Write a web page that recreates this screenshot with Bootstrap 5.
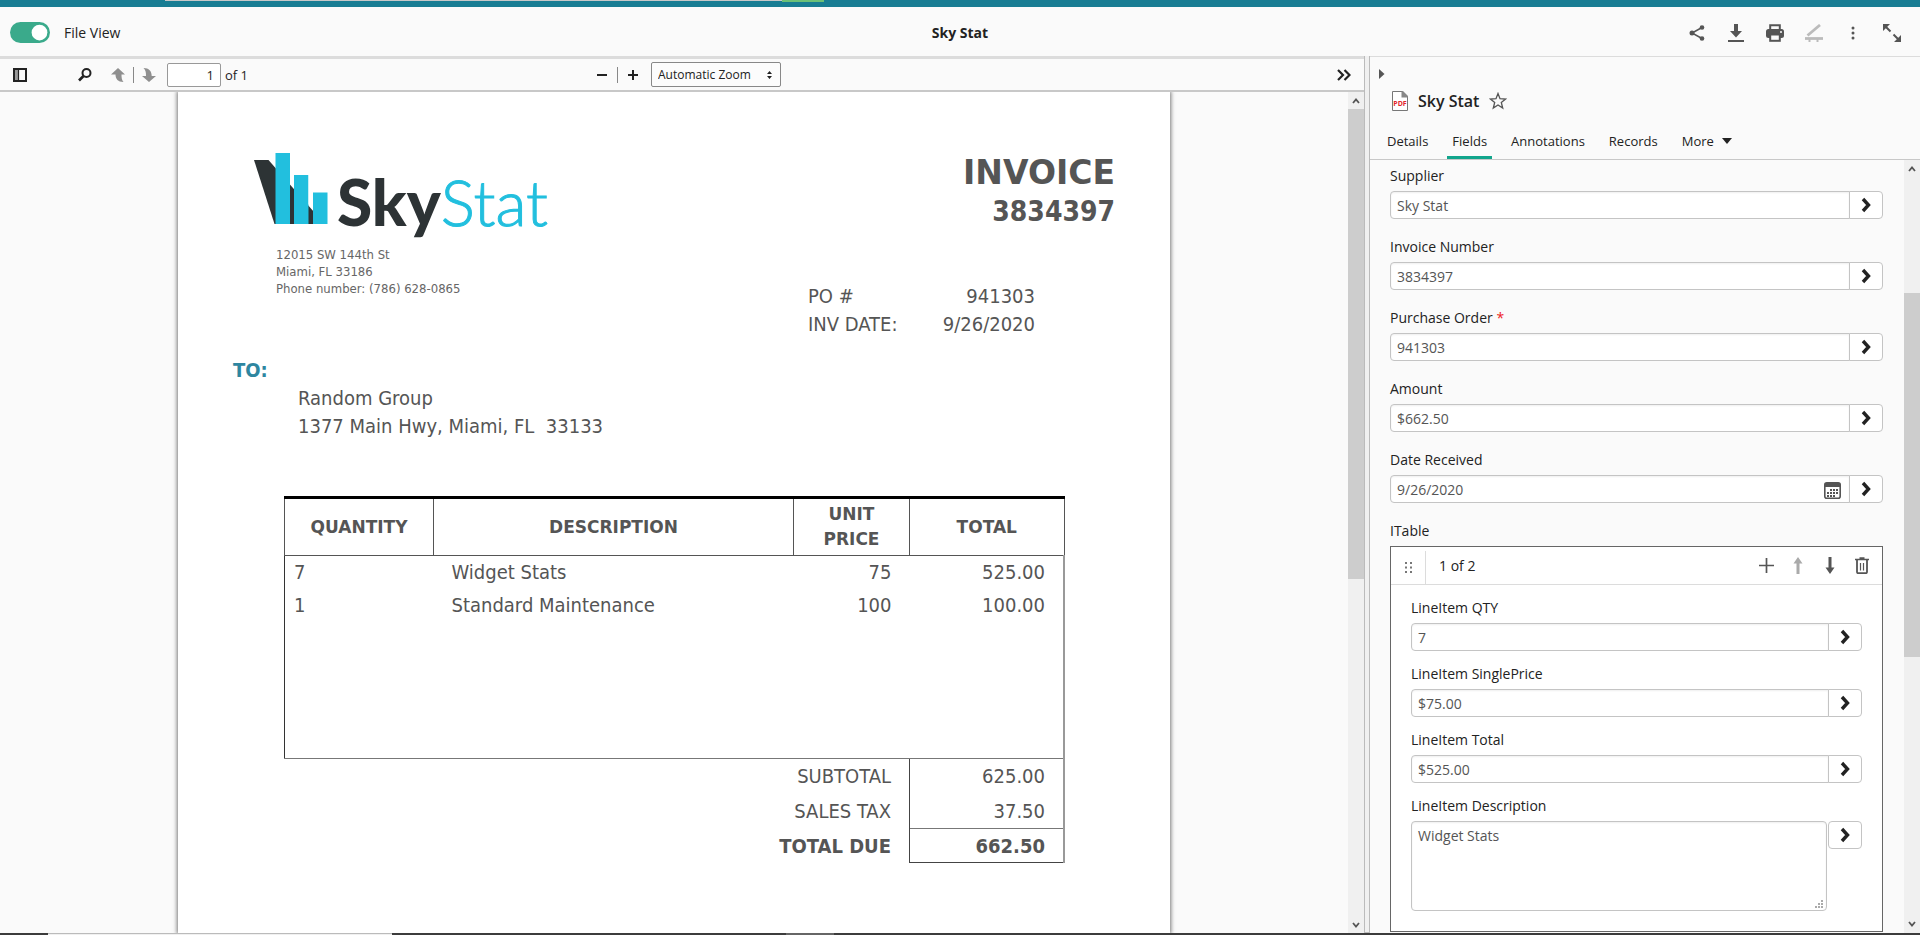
<!DOCTYPE html>
<html lang="en">
<head>
<meta charset="utf-8">
<meta name="viewport" content="width=device-width, initial-scale=1">
<title>Sky Stat</title>
<link href="https://cdn.jsdelivr.net/npm/bootstrap@5.3.0/dist/css/bootstrap.min.css" rel="stylesheet">
<style>
  body { font-family: "Open Sans", "Noto Sans", sans-serif; font-size: 14px; line-height: 20px; color: #222; background: #fafafa; }
  svg { display: block; }
  .min-h-0 { min-height: 0; }
  .icon-btn { border: 0; background: none; padding: 0; color: #555; display: flex; align-items: center; justify-content: center; flex: none; }
  .brand-strip { height: 7px; background: #187d93; padding-left: 165px; }
  .strip-search { width: 617px; height: 1px; background: #c8c8c8; }
  .strip-button { width: 42px; height: 2px; background: #6cc077; }
  .app-header { height: 49px; padding: 2px 10px 0; }
  .app-header > * { flex: 1 1 33%; }
  .file-switch { min-height: 0; gap: 14px; }
  .file-switch .form-check-input { width: 40px; height: 21px; margin: 0; border: 0; background-color: #3aaa8b; background-image: url("data:image/svg+xml,%3csvg xmlns='http://www.w3.org/2000/svg' viewBox='-4 -4 8 8'%3e%3ccircle r='3' fill='%23fff'/%3e%3c/svg%3e"); }
  .header-tools { gap: 21px; padding-right: 9px; }
  .header-tools .icon-btn { width: 18px; height: 18px; }

  .viewer { border-top: 3px solid #dcdcdc; min-width: 0; }
  .pdf-bar { height: 33px; padding: 0 13px; border-bottom: 2px solid #c8c8c8; font-size: 13px; }
  .pdf-bar .icon-btn { width: 14px; height: 16px; color: #222; }
  .pdf-bar .rule { width: 1px; height: 16px; background: #888; }
  .bar-side { flex: 1 1 0; }
  .find-btn { margin: 0 19px 0 51px; }
  .zoom-group { padding-left: 12px; }
  .page-input { width: 54px; height: 24px; margin-left: 11px; border: 1px solid #999; border-radius: 2px; background: #fff; text-align: right; padding: 0 6px; font-size: 13px; color: #222; }
  .zoom-select { width: 130px; height: 25px; margin-left: 11px; border: 1px solid #888; border-radius: 2px; padding: 0 6px; font-size: 12px; color: #222; appearance: none; background: #fcfcfc url("data:image/svg+xml,%3csvg xmlns='http://www.w3.org/2000/svg' width='7' height='10'%3e%3cpath d='M1 4L3.500 1L6 4zM1 6L3.500 9L6 6z' fill='%23222'/%3e%3c/svg%3e") no-repeat right 7px center; }
  .scroll-col { width: 16px; background: #f0f0f0; flex: none; }
  .scroll-col .icon-btn { height: 17px; }
  .scroll-thumb { background: #cdcdcd; }
  .splitter { width: 6px; background: #f0f0f0; border: 1px solid #bbb; border-top: 0; flex: none; }

  .sheet { width: 100%; max-width: 992px; background: #fff; box-shadow: 0 0 4px 1px #777; color: #555; font-family: "DejaVu Sans Condensed", "DejaVu Sans", sans-serif; font-stretch: condensed; font-size: 20px; line-height: 28px; padding: 60px 55px 72px; }
  .logo-block { margin-left: 21px; }
  .logo-block address { margin: 0 0 0 22px; font-size: 13px; line-height: 17px; color: #666; }
  .logo-word { font-family: Lato, sans-serif; font-size: 64px; }
  .inv-head { width: 307px; }
  .inv-title { font-family: "DejaVu Sans", sans-serif; font-stretch: normal; font-size: 33px; line-height: 41px; font-weight: 700; margin: 0; }
  .inv-number { font-size: 28px; line-height: 38px; font-weight: 700; margin: 0 0 51px; }
  .inv-meta { width: 227px; }
  .bill-label { color: #2e86a0; font-weight: 700; margin: 18px 0 0; }
  .bill-to { margin: 0 0 56px 65px; white-space: pre; }
  .inv-table { width: 781px; margin-left: 51px; table-layout: fixed; border-collapse: collapse; }
  .inv-table th, .inv-table td { padding: 0 18px; vertical-align: middle; }
  .inv-table thead th { height: 58px; border: 1px solid #555; border-top: 3px solid #000; text-align: center; font-family: "DejaVu Sans", sans-serif; font-stretch: normal; font-size: 17px; line-height: 25px; }
  .inv-table tbody td { height: 33px; }
  .inv-table tbody td:first-child { border-left: 1px solid #333; padding-left: 9px; }
  .inv-table tbody td:last-child, .inv-table tfoot td { border-right: 2px solid #999; }
  .inv-table tbody .filler td { height: 137px; border-bottom: 1px solid #777; }
  .inv-table tfoot td { height: 35px; border-left: 1px solid #444; }
  .inv-table tfoot th { font-weight: 400; }
  .inv-table tfoot .due th, .inv-table tfoot .due td { font-weight: 700; }
  .inv-table tfoot .due td { height: 34px; border-top: 1px solid #777; border-bottom: 1px solid #444; }
  .col-qty { width: 149px; }
  .col-desc { width: 360px; }
  .col-unit { width: 116px; }

  .info-pane { flex: 0 0 550px; border-top: 1px solid #dcdcdc; }
  .collapse-btn { height: 18px; margin: 8px 0 0 9px; }
  .pane-head { padding: 7px 0 13px 22px; }
  .pane-title { font-size: 16px; line-height: 22px; font-weight: 600; margin: 0 10px; }
  .pane-tabs { padding: 0 12px; gap: 14px; border-bottom: 1px solid #c8c8c8; font-size: 13px; }
  .pane-tabs .nav-link { color: #222; padding: 6px 5px 5px; border-bottom: 3px solid transparent; }
  .pane-tabs .nav-link.active { border-bottom-color: #12a58c; }
  .field { margin-bottom: 18px; }
  .field .form-label, .table-label { display: block; margin: 0 0 5px; }
  .required { color: #e22; }
  .field .form-control { height: 28px; padding: 0 6px; font-size: 14px; line-height: 20px; color: #555; border-color: #c4c4c4; border-radius: 4px; box-shadow: inset 0 1px 2px #0001; }
  .field .btn { width: 34px; height: 28px; padding: 0; border: 1px solid #c4c4c4; border-radius: 4px; background: #fff; color: #222; display: flex; align-items: center; justify-content: center; }
  .field textarea.form-control { height: 90px; padding-top: 4px; resize: none; }
  .memo-row { gap: 1px; }
  .grip { right: 4px; bottom: 3px; color: #aaa; }
  .date-box .form-control { padding-right: 34px; border-radius: 4px 0 0 4px; }
  .date-box .icon-btn { right: 9px; top: 7px; z-index: 6; }
  .pane-scroll { padding: 6px 21px 0 20px; overflow: hidden; }
  .item-panel { border: 1px solid #666; background: #fff; }
  .item-bar { height: 38px; border-bottom: 1px solid #dcdcdc; }
  .item-bar .handle { width: 35px; border-right: 1px solid #dcdcdc; }
  .item-bar .count { margin-left: 13px; }
  .item-tools { gap: 14px; padding-right: 11px; }
  .item-tools .icon-btn { width: 18px; }
  .item-tools .icon-btn:disabled { color: #aaa; }
  .item-body { padding: 13px 20px 20px; }
  .item-body .field { margin-bottom: 13px; }
  .item-body .field:last-child { margin-bottom: 0; }
  .taskbar { height: 2px; background: #3c3c3c; padding-left: 48px; }
  .task-search { width: 344px; background: #f0f0f0; border-top: 1px solid #bbb; }
  .task-active { width: 48px; background: #666; margin-left: 394px; }
</style>
</head>
<body class="vh-100 d-flex flex-column overflow-hidden">

<svg class="d-none" aria-hidden="true">
  <symbol id="go" viewBox="0 0 10 16"><path d="M2 2l5.500 6L2 14" fill="none" stroke="currentColor" stroke-width="3.400"/></symbol>
  <symbol id="up" viewBox="0 0 8 6"><path d="M1 5l3-3.500L7 5" fill="none" stroke="currentColor" stroke-width="1.800"/></symbol>
  <symbol id="down" viewBox="0 0 8 6"><path d="M1 1l3 3.500L7 1" fill="none" stroke="currentColor" stroke-width="1.800"/></symbol>
  <symbol id="arrow" viewBox="0 0 10 17"><path d="M5 0L9.500 6.500H6.500V17H3.500V6.500H.5z" fill="currentColor"/></symbol>
</svg>

<div class="brand-strip d-flex flex-shrink-0"><div class="strip-search"></div><div class="strip-button"></div></div>

<header class="app-header d-flex align-items-center flex-shrink-0">
  <div class="file-switch form-check form-switch d-flex align-items-center p-0 m-0">
    <input class="form-check-input" type="checkbox" role="switch" id="fileView" checked>
    <label for="fileView">File View</label>
  </div>
  <div class="text-center fw-bold">Sky Stat</div>
  <div class="header-tools d-flex justify-content-end align-items-center">
    <button class="icon-btn" aria-label="Share"><svg width="16" height="18" viewBox="0 0 16 18"><path d="M13 3.500L3 9l10 5.500" fill="none" stroke="currentColor" stroke-width="1.500"/><g fill="currentColor"><circle cx="13" cy="3.500" r="2.300"/><circle cx="3" cy="9" r="2.500"/><circle cx="13" cy="14.500" r="2.300"/></g></svg></button>
    <button class="icon-btn" aria-label="Download"><svg width="18" height="18" viewBox="0 0 18 18" fill="currentColor"><path d="M7 0h4v7h4l-6 6.500L3 7h4zM1 16h16v2H1z"/></svg></button>
    <button class="icon-btn" aria-label="Print"><svg width="18" height="18" viewBox="0 0 18 18"><path d="M4.200 5V1.200h9.600V5" fill="none" stroke="currentColor" stroke-width="2"/><rect y="5" width="18" height="9" rx="2.500" fill="currentColor"/><rect x="4.200" y="10.500" width="9.600" height="6.300" fill="#fafafa" stroke="currentColor" stroke-width="2"/><circle cx="15" cy="8" r="1" fill="#fafafa"/></svg></button>
    <button class="icon-btn" aria-label="Edit" disabled><svg width="18" height="18" viewBox="0 0 18 18" fill="none" stroke="#bbb"><path d="M15 1L2.500 11.500" stroke-width="2.800"/><path d="M0 14.500h18" stroke-width="2.800"/><path d="M4.500 15v3M12.500 15v3" stroke-width="2"/></svg></button>
    <button class="icon-btn" aria-label="More actions"><svg width="4" height="14" viewBox="0 0 4 14" fill="currentColor"><circle cx="2" cy="2" r="1.500"/><circle cx="2" cy="7" r="1.500"/><circle cx="2" cy="12" r="1.500"/></svg></button>
    <button class="icon-btn" aria-label="Full screen"><svg width="18" height="18" viewBox="0 0 18 18"><path d="M0 0h7L0 7zM18 18h-7l7-7z" fill="currentColor"/><path d="M2 2l5.500 5.500M10.500 10.500L16 16" stroke="currentColor" stroke-width="2"/></svg></button>
  </div>
</header>

<main class="d-flex flex-grow-1 min-h-0">
  <section class="viewer d-flex flex-column flex-grow-1">
    <div class="pdf-bar d-flex align-items-center flex-shrink-0">
      <div class="bar-side d-flex align-items-center">
        <button class="icon-btn" aria-label="Sidebar"><svg width="14" height="14" viewBox="0 0 14 14"><rect x="1" y="1" width="12" height="12" fill="none" stroke="currentColor" stroke-width="2"/><path d="M2 2h3v10H2z" fill="#999"/><path d="M5.500 1v12" stroke="currentColor" stroke-width="1.200"/></svg></button>
        <button class="icon-btn find-btn" aria-label="Find"><svg width="14" height="14" viewBox="0 0 14 14" fill="none" stroke="currentColor"><circle cx="8.500" cy="5" r="4" stroke-width="2"/><path d="M5.500 8L1 12.500" stroke-width="2.600"/></svg></button>
        <button class="icon-btn" aria-label="Previous page"><svg width="14" height="14" viewBox="0 0 14 14"><path d="M7 0l7 6.500h-3.500C10.500 10 10.800 12 12.500 14 7 14 4.500 11 4.500 6.500H0z" fill="#8f8f8f"/></svg></button>
        <span class="rule mx-2"></span>
        <button class="icon-btn" aria-label="Next page"><svg width="14" height="14" viewBox="0 0 14 14"><path d="M7 14L0 8h4C4 4 3.500 2 1.500 0 7 0 9.700 3 9.700 8H14z" fill="#8f8f8f"/></svg></button>
        <input class="page-input" value="1" id="pageNo" aria-label="Page"><label class="ms-1" for="pageNo">of 1</label>
      </div>
      <div class="zoom-group d-flex align-items-center">
        <button class="icon-btn" aria-label="Zoom out"><svg width="12" height="12"><path d="M1 6h10" stroke="currentColor" stroke-width="2"/></svg></button>
        <span class="rule mx-2"></span>
        <button class="icon-btn" aria-label="Zoom in"><svg width="12" height="12"><path d="M1 6h10M6 1v10" stroke="currentColor" stroke-width="2"/></svg></button>
        <select class="zoom-select" aria-label="Zoom"><option>Automatic Zoom</option></select>
      </div>
      <div class="bar-side d-flex justify-content-end">
        <button class="icon-btn" aria-label="Tools"><svg width="14" height="12" viewBox="0 0 14 12"><path d="M1 1l5 5-5 5M7.500 1l5 5-5 5" fill="none" stroke="currentColor" stroke-width="2.200"/></svg></button>
      </div>
    </div>
    <div class="d-flex flex-grow-1 min-h-0">
      <div class="flex-grow-1 overflow-hidden d-flex justify-content-center">
        <article class="sheet flex-shrink-0">
          <div class="d-flex justify-content-between align-items-start">
            <div class="logo-block">
              <svg width="310" height="94" viewBox="0 0 310 94" role="img" aria-label="SkyStat">
                <path d="M0 8h14.500L60 60v12H20.500z" fill="#2d3335"/>
                <path d="M21.500 1h14.500v71H21.500zM40 23h14.500v49H40zM59 40.500h14.500V72H59z" fill="#22bfde"/>
                <path d="M36 1h4v35l-4-5zM54.500 20H59v37l-4.500-5z" fill="#fff"/>
                <text class="logo-word" x="83" y="74" font-weight="900" fill="#2d3335">Sky<tspan font-weight="300" fill="#22bfde" stroke="#22bfde" stroke-width="1">Stat</tspan></text>
              </svg>
              <address>12015 SW 144th St<br>Miami, FL 33186<br>Phone number: (786) 628-0865</address>
            </div>
            <div class="inv-head">
              <h1 class="inv-title text-end">INVOICE</h1>
              <p class="inv-number text-end">3834397</p>
              <div class="inv-meta">
                <div class="d-flex justify-content-between"><span>PO #</span><span>941303</span></div>
                <div class="d-flex justify-content-between"><span>INV DATE:</span><span>9/26/2020</span></div>
              </div>
            </div>
          </div>
          <p class="bill-label">TO:</p>
          <p class="bill-to">Random Group
1377 Main Hwy, Miami, FL  33133</p>
          <table class="inv-table">
            <colgroup><col class="col-qty"><col class="col-desc"><col class="col-unit"><col></colgroup>
            <thead><tr><th>QUANTITY</th><th>DESCRIPTION</th><th>UNIT PRICE</th><th>TOTAL</th></tr></thead>
            <tbody>
              <tr><td>7</td><td>Widget Stats</td><td class="text-end">75</td><td class="text-end">525.00</td></tr>
              <tr><td>1</td><td>Standard Maintenance</td><td class="text-end">100</td><td class="text-end">100.00</td></tr>
              <tr class="filler"><td></td><td></td><td></td><td></td></tr>
            </tbody>
            <tfoot>
              <tr><th colspan="3" class="text-end">SUBTOTAL</th><td class="text-end">625.00</td></tr>
              <tr><th colspan="3" class="text-end">SALES TAX</th><td class="text-end">37.50</td></tr>
              <tr class="due"><th colspan="3" class="text-end">TOTAL DUE</th><td class="text-end">662.50</td></tr>
            </tfoot>
          </table>
        </article>
      </div>
      <div class="scroll-col d-flex flex-column">
        <button class="icon-btn" aria-label="Scroll up"><svg width="8" height="6"><use href="#up"/></svg></button>
        <div class="scroll-thumb" style="flex:471 0 0"></div><div style="flex:337 0 0"></div>
        <button class="icon-btn" aria-label="Scroll down"><svg width="8" height="6"><use href="#down"/></svg></button>
      </div>
    </div>
  </section>
  <div class="splitter"></div>

  <aside class="info-pane d-flex flex-column">
    <button class="icon-btn collapse-btn align-self-start" aria-label="Collapse panel"><svg width="6" height="10"><path d="M0 0l5.500 5L0 10z" fill="currentColor"/></svg></button>
    <div class="pane-head d-flex align-items-center">
      <svg width="16" height="20" viewBox="0 0 16 20"><path d="M.5.5h10l5 5v14H.5z" fill="#fff" stroke="#777"/><path d="M9.500 0H11l5 5v1.500H9.500z" fill="#888"/><text x="8" y="15" text-anchor="middle" font-size="7" font-weight="700" fill="#e2252b">PDF</text></svg>
      <h2 class="pane-title">Sky Stat</h2>
      <button class="icon-btn" aria-label="Favorite"><svg width="18" height="18" viewBox="0 0 18 18"><path d="M9 1.500l2 5.200 5.600.3-4.300 3.500 1.400 5.500L9 13l-4.700 3 1.400-5.500L1.400 7 7 6.700z" fill="none" stroke="#555" stroke-width="1.300"/></svg></button>
    </div>
    <nav class="pane-tabs nav">
      <a class="nav-link" href="#">Details</a>
      <a class="nav-link active" href="#">Fields</a>
      <a class="nav-link" href="#">Annotations</a>
      <a class="nav-link" href="#">Records</a>
      <a class="nav-link d-flex align-items-center gap-2" href="#">More <svg width="10" height="6"><path d="M0 0h10L5 6z" fill="#222"/></svg></a>
    </nav>
    <div class="d-flex flex-grow-1 min-h-0">
      <div class="pane-scroll flex-grow-1">
        <div class="field"><label class="form-label" for="supplier">Supplier</label>
          <div class="input-group"><input class="form-control" id="supplier" value="Sky Stat"><button class="btn" aria-label="Open supplier"><svg width="10" height="16"><use href="#go"/></svg></button></div></div>
        <div class="field"><label class="form-label" for="invNo">Invoice Number</label>
          <div class="input-group"><input class="form-control" id="invNo" value="3834397"><button class="btn" aria-label="Open invoice number"><svg width="10" height="16"><use href="#go"/></svg></button></div></div>
        <div class="field"><label class="form-label" for="po">Purchase Order <span class="required">*</span></label>
          <div class="input-group"><input class="form-control" id="po" value="941303"><button class="btn" aria-label="Open purchase order"><svg width="10" height="16"><use href="#go"/></svg></button></div></div>
        <div class="field"><label class="form-label" for="amount">Amount</label>
          <div class="input-group"><input class="form-control" id="amount" value="$662.50"><button class="btn" aria-label="Open amount"><svg width="10" height="16"><use href="#go"/></svg></button></div></div>
        <div class="field"><label class="form-label" for="received">Date Received</label>
          <div class="input-group"><div class="date-box position-relative flex-grow-1"><input class="form-control" id="received" value="9/26/2020"><button class="icon-btn position-absolute" aria-label="Pick a date"><svg width="17" height="17" viewBox="0 0 17 17"><rect x=".8" y=".8" width="15.400" height="15.400" rx="2" fill="#fff" stroke="currentColor" stroke-width="1.600"/><path d="M1 1h15v4H1z" fill="currentColor"/><path d="M6 8h9M3 11h12M3 14h9" stroke="currentColor" stroke-width="2" stroke-dasharray="2 1"/></svg></button></div><button class="btn" aria-label="Open date received"><svg width="10" height="16"><use href="#go"/></svg></button></div></div>
        <div class="table-label">ITable</div>
        <div class="item-panel">
          <div class="item-bar d-flex align-items-center">
            <div class="handle d-flex align-items-center justify-content-center align-self-stretch mt-1"><svg width="9" height="12" viewBox="0 0 9 12"><path d="M1 1h2M6 1h2M1 5.500h2M6 5.500h2M1 10h2M6 10h2" stroke="#777" stroke-width="2"/></svg></div>
            <span class="count me-auto">1 of 2</span>
            <div class="item-tools d-flex align-items-center">
              <button class="icon-btn" aria-label="Add"><svg width="15" height="15"><path d="M0 7.500h15M7.500 0v15" stroke="currentColor" stroke-width="1.700"/></svg></button>
              <button class="icon-btn" aria-label="Move up" disabled><svg width="10" height="17"><use href="#arrow"/></svg></button>
              <button class="icon-btn" aria-label="Move down"><svg width="10" height="17"><g transform="rotate(180 5 8.500)"><use href="#arrow"/></g></svg></button>
              <button class="icon-btn" aria-label="Delete"><svg width="14" height="17" viewBox="0 0 14 17" fill="none" stroke="currentColor"><path d="M0 2.500h14M4.500 1h5" stroke-width="1.600"/><path d="M2 3v12q0 1.200 1.200 1.200h7.600q1.200 0 1.200-1.200V3" stroke-width="1.800"/><path d="M5.500 6v7.500M8.500 6v7.500" stroke-width="1.200"/></svg></button>
            </div>
          </div>
          <div class="item-body">
            <div class="field"><label class="form-label" for="qty">LineItem QTY</label>
              <div class="input-group"><input class="form-control" id="qty" value="7"><button class="btn" aria-label="Open quantity"><svg width="10" height="16"><use href="#go"/></svg></button></div></div>
            <div class="field"><label class="form-label" for="price">LineItem SinglePrice</label>
              <div class="input-group"><input class="form-control" id="price" value="$75.00"><button class="btn" aria-label="Open price"><svg width="10" height="16"><use href="#go"/></svg></button></div></div>
            <div class="field"><label class="form-label" for="total">LineItem Total</label>
              <div class="input-group"><input class="form-control" id="total" value="$525.00"><button class="btn" aria-label="Open total"><svg width="10" height="16"><use href="#go"/></svg></button></div></div>
            <div class="field"><label class="form-label" for="desc">LineItem Description</label>
              <div class="memo-row d-flex align-items-start"><div class="position-relative flex-grow-1"><textarea class="form-control" id="desc">Widget Stats</textarea><svg class="grip position-absolute" width="8" height="8" fill="currentColor"><path d="M6 0h2v2H6zM3 3h2v2H3zM6 3h2v2H6zM0 6h2v2H0zM3 6h2v2H3zM6 6h2v2H6z"/></svg></div><button class="btn" aria-label="Open description"><svg width="10" height="16"><use href="#go"/></svg></button></div></div>
          </div>
        </div>
      </div>
      <div class="scroll-col d-flex flex-column">
        <button class="icon-btn" aria-label="Scroll up"><svg width="8" height="6"><use href="#up"/></svg></button>
        <div style="flex:116 0 0"></div><div class="scroll-thumb" style="flex:363 0 0"></div><div style="flex:259 0 0"></div>
        <button class="icon-btn" aria-label="Scroll down"><svg width="8" height="6"><use href="#down"/></svg></button>
      </div>
    </div>
  </aside>
</main>

<footer class="taskbar d-flex flex-shrink-0"><div class="task-search"></div><div class="task-active"></div></footer>
<script src="https://cdn.jsdelivr.net/npm/bootstrap@5.3.0/dist/js/bootstrap.bundle.min.js"></script>
</body>
</html>
